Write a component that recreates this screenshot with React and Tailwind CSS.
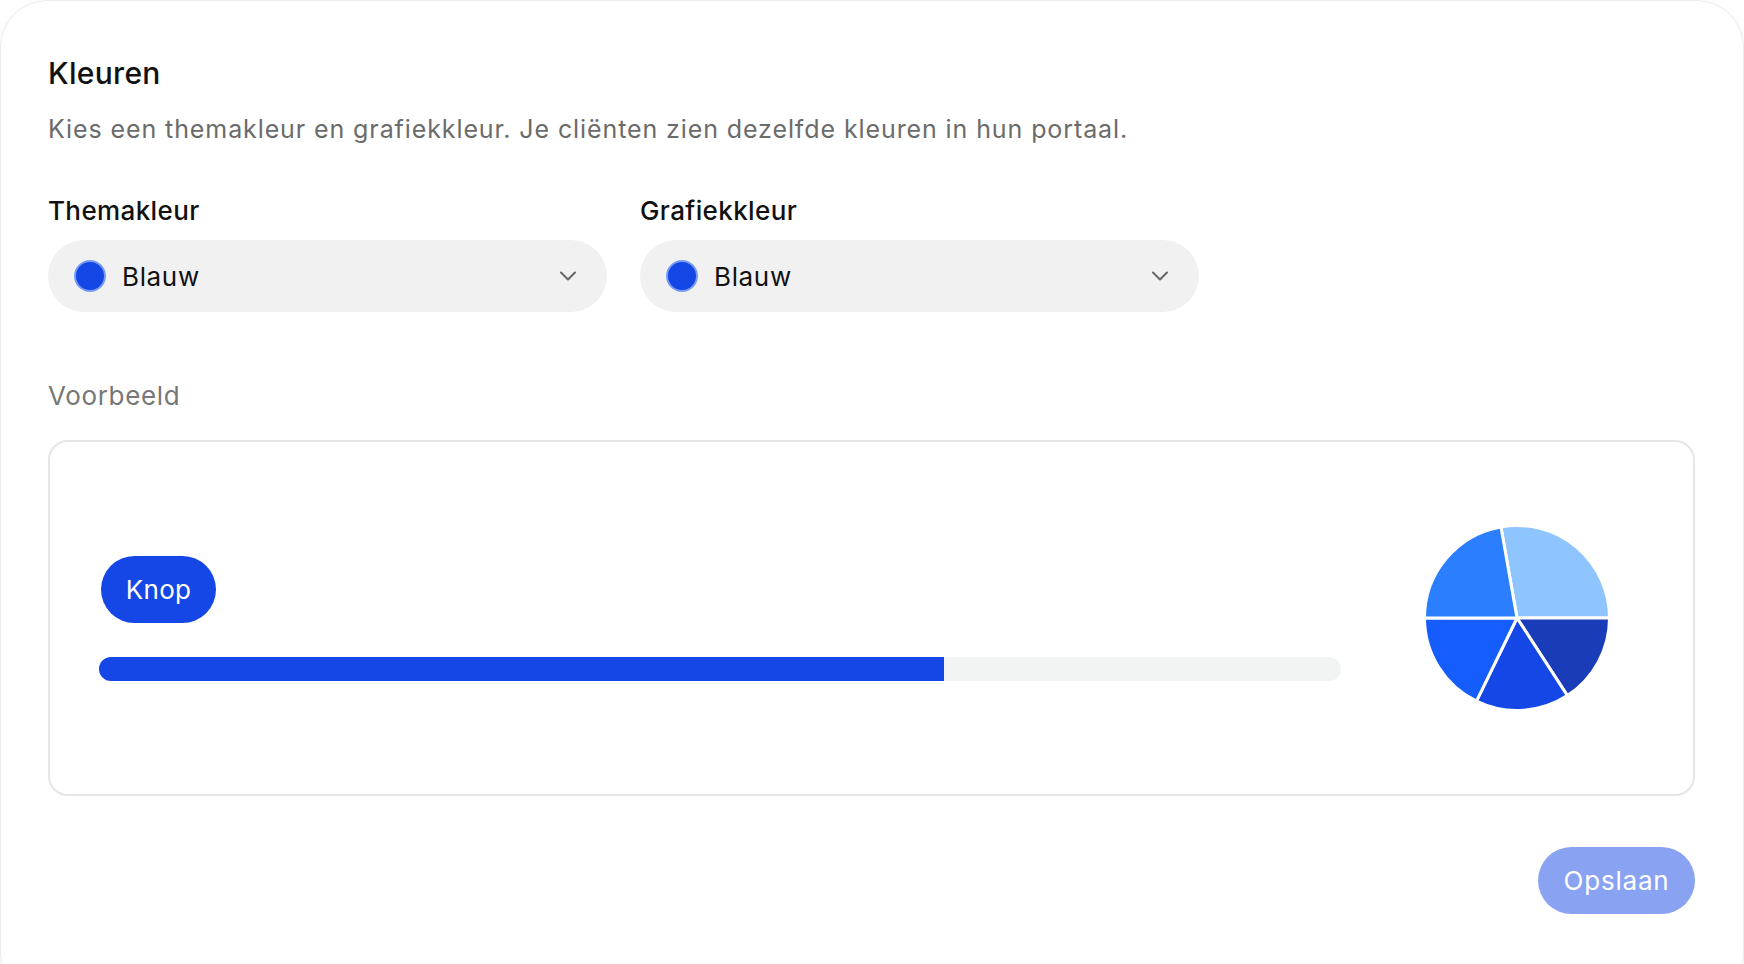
import React, { useState } from 'react';
import { ChevronDown } from 'lucide-react';

const font = { fontFamily: 'Inter, "Noto Sans", sans-serif' };

// pie slices, angles clockwise from 12 o'clock
const slices = [
  { from: -10, to: 90, color: '#8ec5ff' },
  { from: 90, to: 147, color: '#193cb8' },
  { from: 147, to: 206, color: '#1447e6' },
  { from: 206, to: 270, color: '#155dfc' },
  { from: 270, to: 350, color: '#2b7fff' },
];

const point = (cx, cy, r, deg) => {
  const a = ((deg - 90) * Math.PI) / 180;
  return [cx + r * Math.cos(a), cy + r * Math.sin(a)];
};

const PieChart = () => {
  const cx = 93, cy = 93, r = 92.5;
  return (
    <svg width="186" height="186" viewBox="0 0 186 186">
      {slices.map((s, i) => {
        const [x1, y1] = point(cx, cy, r, s.from);
        const [x2, y2] = point(cx, cy, r, s.to);
        const large = s.to - s.from > 180 ? 1 : 0;
        return (
          <path
            key={i}
            d={`M${cx} ${cy} L${x1} ${y1} A${r} ${r} 0 ${large} 1 ${x2} ${y2} Z`}
            fill={s.color}
            stroke="#fff"
            strokeWidth="3"
            strokeLinejoin="round"
          />
        );
      })}
    </svg>
  );
};

const ColorSelect = ({ label }) => (
  <div className="flex flex-col w-[559px]">
    <span className="text-[26px] font-medium tracking-[0.015em] text-[#111] leading-none h-[32px]">{label}</span>
    <button className="mt-[10px] h-[72px] rounded-full bg-[#f1f1f1] flex items-center pl-[26px] pr-[25px] text-left">
      <span className="w-[32px] h-[32px] rounded-full bg-[#1447e6] border-2 border-[#7b9cf5]" />
      <span className="ml-[16px] text-[26px] tracking-[0.025em] text-[#111] flex-1">Blauw</span>
      <ChevronDown className="w-[28px] h-[28px] text-[#666]" strokeWidth={1.75} />
    </button>
  </div>
);

export default function App() {
  const [progress] = useState(68);

  return (
    <div className="w-[1744px] h-[964px] bg-white overflow-hidden" style={font}>
      <div className="h-[1000px] rounded-[48px] border border-[#ececec] shadow-[0_2px_8px_rgba(0,0,0,0.06)] bg-white pl-[47px] pr-[48px] pt-[52px]">
        <h2 className="text-[30px] font-medium tracking-[0.01em] text-[#111] leading-[40px]">Kleuren</h2>
        <p className="mt-[21px] text-[25px] tracking-[0.036em] text-[#6b6b6b] leading-[30px]">
          Kies een themakleur en grafiekkleur. Je cliënten zien dezelfde kleuren in hun portaal.
        </p>

        <div className="mt-[54px] flex gap-[33px]">
          <ColorSelect label="Themakleur" />
          <ColorSelect label="Grafiekkleur" />
        </div>

        <div className="mt-[69px] text-[26px] tracking-[0.025em] text-[#777] leading-[30px]">Voorbeeld</div>

        <div className="mt-[29px] h-[356px] rounded-[20px] border-2 border-[#e6e6e6] flex items-center pl-[49px] pr-[83px] gap-[83px]">
          <div className="flex-1 flex flex-col items-start gap-[34px]">
            <button className="ml-[2px] h-[67px] w-[115px] rounded-full bg-[#1447e6] text-white text-[26px] tracking-[0.01em]">
              Knop
            </button>
            <div className="w-full h-[24px] rounded-full bg-[#f2f3f3] overflow-hidden">
              <div className="h-full bg-[#1447e6]" style={{ width: `${progress}%` }} />
            </div>
          </div>
          <PieChart />
        </div>

        <div className="mt-[51px] flex justify-end">
          <button className="h-[67px] w-[157px] rounded-full bg-[#89a3f2] text-white text-[26px] tracking-[0.03em]">
            Opslaan
          </button>
        </div>
      </div>
    </div>
  );
}
